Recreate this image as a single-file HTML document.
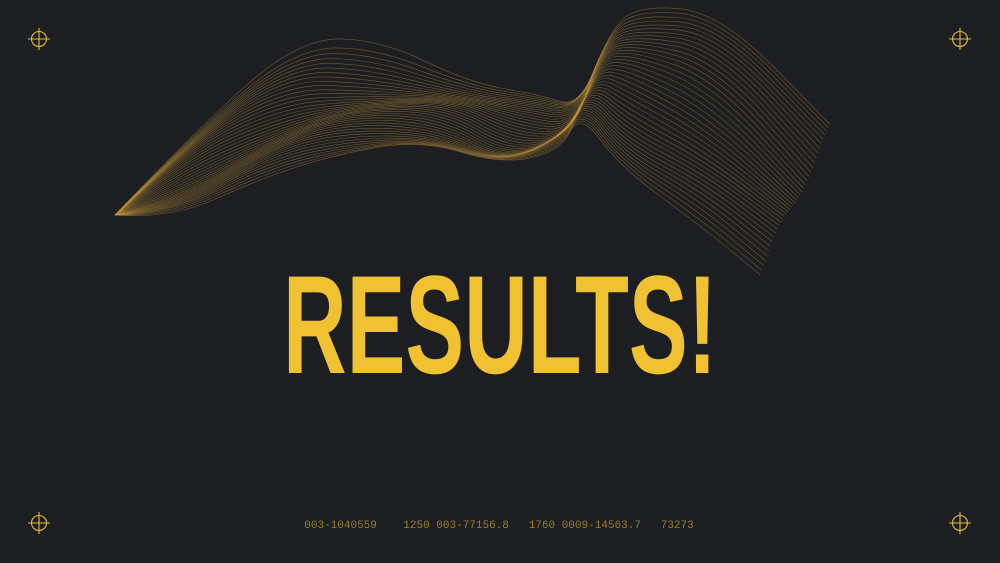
<!DOCTYPE html>
<html><head><meta charset="utf-8"><style>
html,body{margin:0;padding:0;background:#1d1e22;}
body{width:1000px;height:563px;position:relative;overflow:hidden;font-family:"Liberation Sans",sans-serif;}
svg{position:absolute;left:0;top:0;}
.code{position:absolute;top:520px;left:-1px;width:1000px;text-align:center;font-family:"Liberation Mono",monospace;font-size:11px;color:#9a7e2c;white-space:pre;}
</style></head><body>
<svg id="w" width="1000" height="563" viewBox="0 0 1000 563"></svg>
<svg width="1000" height="563" viewBox="0 0 1000 563">
<g stroke="#e8bb35" stroke-width="1.1" fill="none">
<g transform="translate(39,39)"><circle r="7.5"/><path d="M-11 0H11M0 -11V11"/></g>
<g transform="translate(960,39)"><circle r="7.5"/><path d="M-11 0H11M0 -11V11"/></g>
<g transform="translate(39,523)"><circle r="7.5"/><path d="M-11 0H11M0 -11V11"/></g>
<g transform="translate(960,523)"><circle r="7.5"/><path d="M-11 0H11M0 -11V11"/></g>
</g>
<text x="283" y="373" textLength="434" lengthAdjust="spacingAndGlyphs" font-family="Liberation Sans Narrow, Liberation Sans, sans-serif" font-weight="bold" font-size="140" fill="#f0c131">RESULTS!</text>
</svg>
<div class="code">003-1040559    1250 003-77156.8   1760 0009-14563.7   73273</div>
<script>
var A=[[115,215],[200,120],[300,40],[380,45],[470,80],[540,90],[580,112],[610,30],[640,0],[720,10],[830,130]];
var B=[[115,215],[170,225],[260,180],[330,150],[420,140],[500,170],[560,150],[580,112],[620,170],[700,230],[760,270]];
var s="",N=40;
for(var i=0;i<=N;i++){var t=i/N;var p=[];
for(var k=0;k<A.length;k++){var tt=t;if(k==2||k==3)tt=Math.pow(t,0.7);if(k==5)tt=1-Math.pow(1-t,1.5);
var wob=Math.sin(t*9+k*1.7)*6*(k>0&&k!=7?1:0);
p.push([A[k][0]+(B[k][0]-A[k][0])*tt,A[k][1]+(B[k][1]-A[k][1])*tt+wob]);}
var d="M"+p[0][0]+" "+p[0][1];
for(var k=1;k<p.length-1;k++){var mx=(p[k][0]+p[k+1][0])/2,my=(p[k][1]+p[k+1][1])/2;d+=" Q"+p[k][0]+" "+p[k][1]+" "+mx+" "+my;}
d+=" L"+p[p.length-1][0]+" "+p[p.length-1][1];
s+='<path d="'+d+'" fill="none" stroke="#c8973a" stroke-width="0.6" opacity="0.5"/>';}
document.getElementById("w").innerHTML=s;
</script>
</body></html>
